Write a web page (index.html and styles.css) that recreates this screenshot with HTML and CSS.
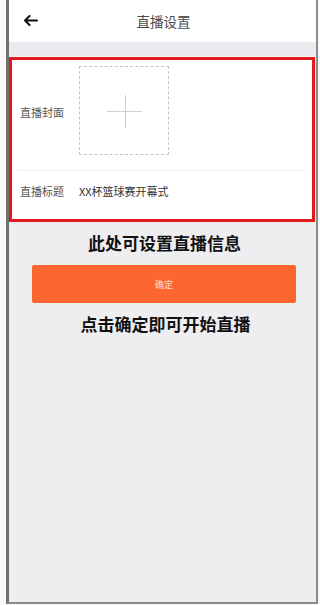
FILE: index.html
```html
<!DOCTYPE html>
<html lang="zh-CN">
<head>
<meta charset="utf-8">
<title>直播设置</title>
<link rel="stylesheet" href="styles.css">
</head>
<body>
<div class="frame">
  <div class="screen">
    <header class="topbar">
      <span class="back">
        <svg width="15" height="11" viewBox="0 0 15 11"><path d="M14 5.5H2M6.5 1L2 5.5L6.5 10" fill="none" stroke="#111" stroke-width="2" stroke-linecap="round" stroke-linejoin="round"/></svg>
      </span>
      <h1 class="title">直播设置</h1>
    </header>
    <div class="strip"></div>
    <section class="panel">
      <div class="row cover-row">
        <span class="label">直播封面</span>
        <div class="upload"><span class="plus-h"></span><span class="plus-v"></span></div>
      </div>
      <div class="divider"></div>
      <div class="row title-row">
        <span class="label">直播标题</span>
        <span class="value">XX杯篮球赛开幕式</span>
      </div>
    </section>
    <p class="note note-top">此处可设置直播信息</p>
    <div class="btn">确定</div>
    <p class="note note-bottom">点击确定即可开始直播</p>
  </div>
</div>
</body>
</html>
```
FILE: styles.css
```css
html, body {
  margin: 0;
  padding: 0;
  background: #fafafa;
  font-family: "Noto Sans CJK SC", "Noto Sans", sans-serif;
}
.frame {
  margin-left: 6px;
  width: 307px;
  height: 602px;
  border-left: 3px solid #6f6f6f;
  border-right: 2px solid #8c8c8c;
  border-bottom: 2px solid #8a8a8a;
  background: #eeedf0;
}
.screen {
  display: flex;
  flex-direction: column;
  height: 100%;
}
.topbar {
  height: 42px;
  background: #ffffff;
  display: flex;
  align-items: center;
  justify-content: center;
  position: relative;
}
.back {
  position: absolute;
  left: 14px;
  top: 15px;
  display: flex;
}
.title {
  margin: 0;
  font-size: 13.5px;
  font-weight: normal;
  color: #4a4a4a;
  padding-left: 2px;
}
.strip {
  height: 14px;
  background: #ebeaef;
  border-bottom: 1px solid #f7f7f9;
}
.panel {
  margin-right: 1px;
  border: 3px solid #e31b1f;
  background: #ffffff;
  display: flex;
  flex-direction: column;
}
.row {
  display: flex;
  align-items: center;
  padding-left: 8px;
}
.cover-row {
  height: 110px;
  align-items: flex-start;
}
.cover-row .label {
  margin-top: 44px;
}
.label {
  width: 59px;
  font-size: 11px;
  color: #555;
  flex-shrink: 0;
}
.upload {
  margin-top: 6px;
  width: 88px;
  height: 87px;
  border: 1px dashed #c4c4c4;
  position: relative;
}
.plus-h {
  position: absolute;
  left: 27px;
  top: 44px;
  width: 35px;
  height: 1px;
  background: #cfcfcf;
}
.plus-v {
  position: absolute;
  left: 45px;
  top: 28px;
  width: 1px;
  height: 33px;
  background: #cfcfcf;
}
.divider {
  height: 1px;
  background: #eeeeee;
  margin: 0 6px;
}
.title-row {
  height: 48px;
  padding-bottom: 9px;
  box-sizing: border-box;
}
.value {
  font-size: 11px;
  color: #333;
}
.note {
  margin: 0;
  text-align: center;
  font-size: 17px;
  font-weight: bold;
  color: #111;
  line-height: 24px;
}
.note-top {
  margin-top: 9px;
  padding-left: 4px;
}
.btn {
  margin: 10px 20px 0 23px;
  height: 38px;
  background: #fe6630;
  border-radius: 2px;
  color: #ffe0d2;
  font-size: 9px;
  display: flex;
  align-items: center;
  justify-content: center;
}
.note-bottom {
  margin-top: 9px;
  padding-left: 6px;
}
```
